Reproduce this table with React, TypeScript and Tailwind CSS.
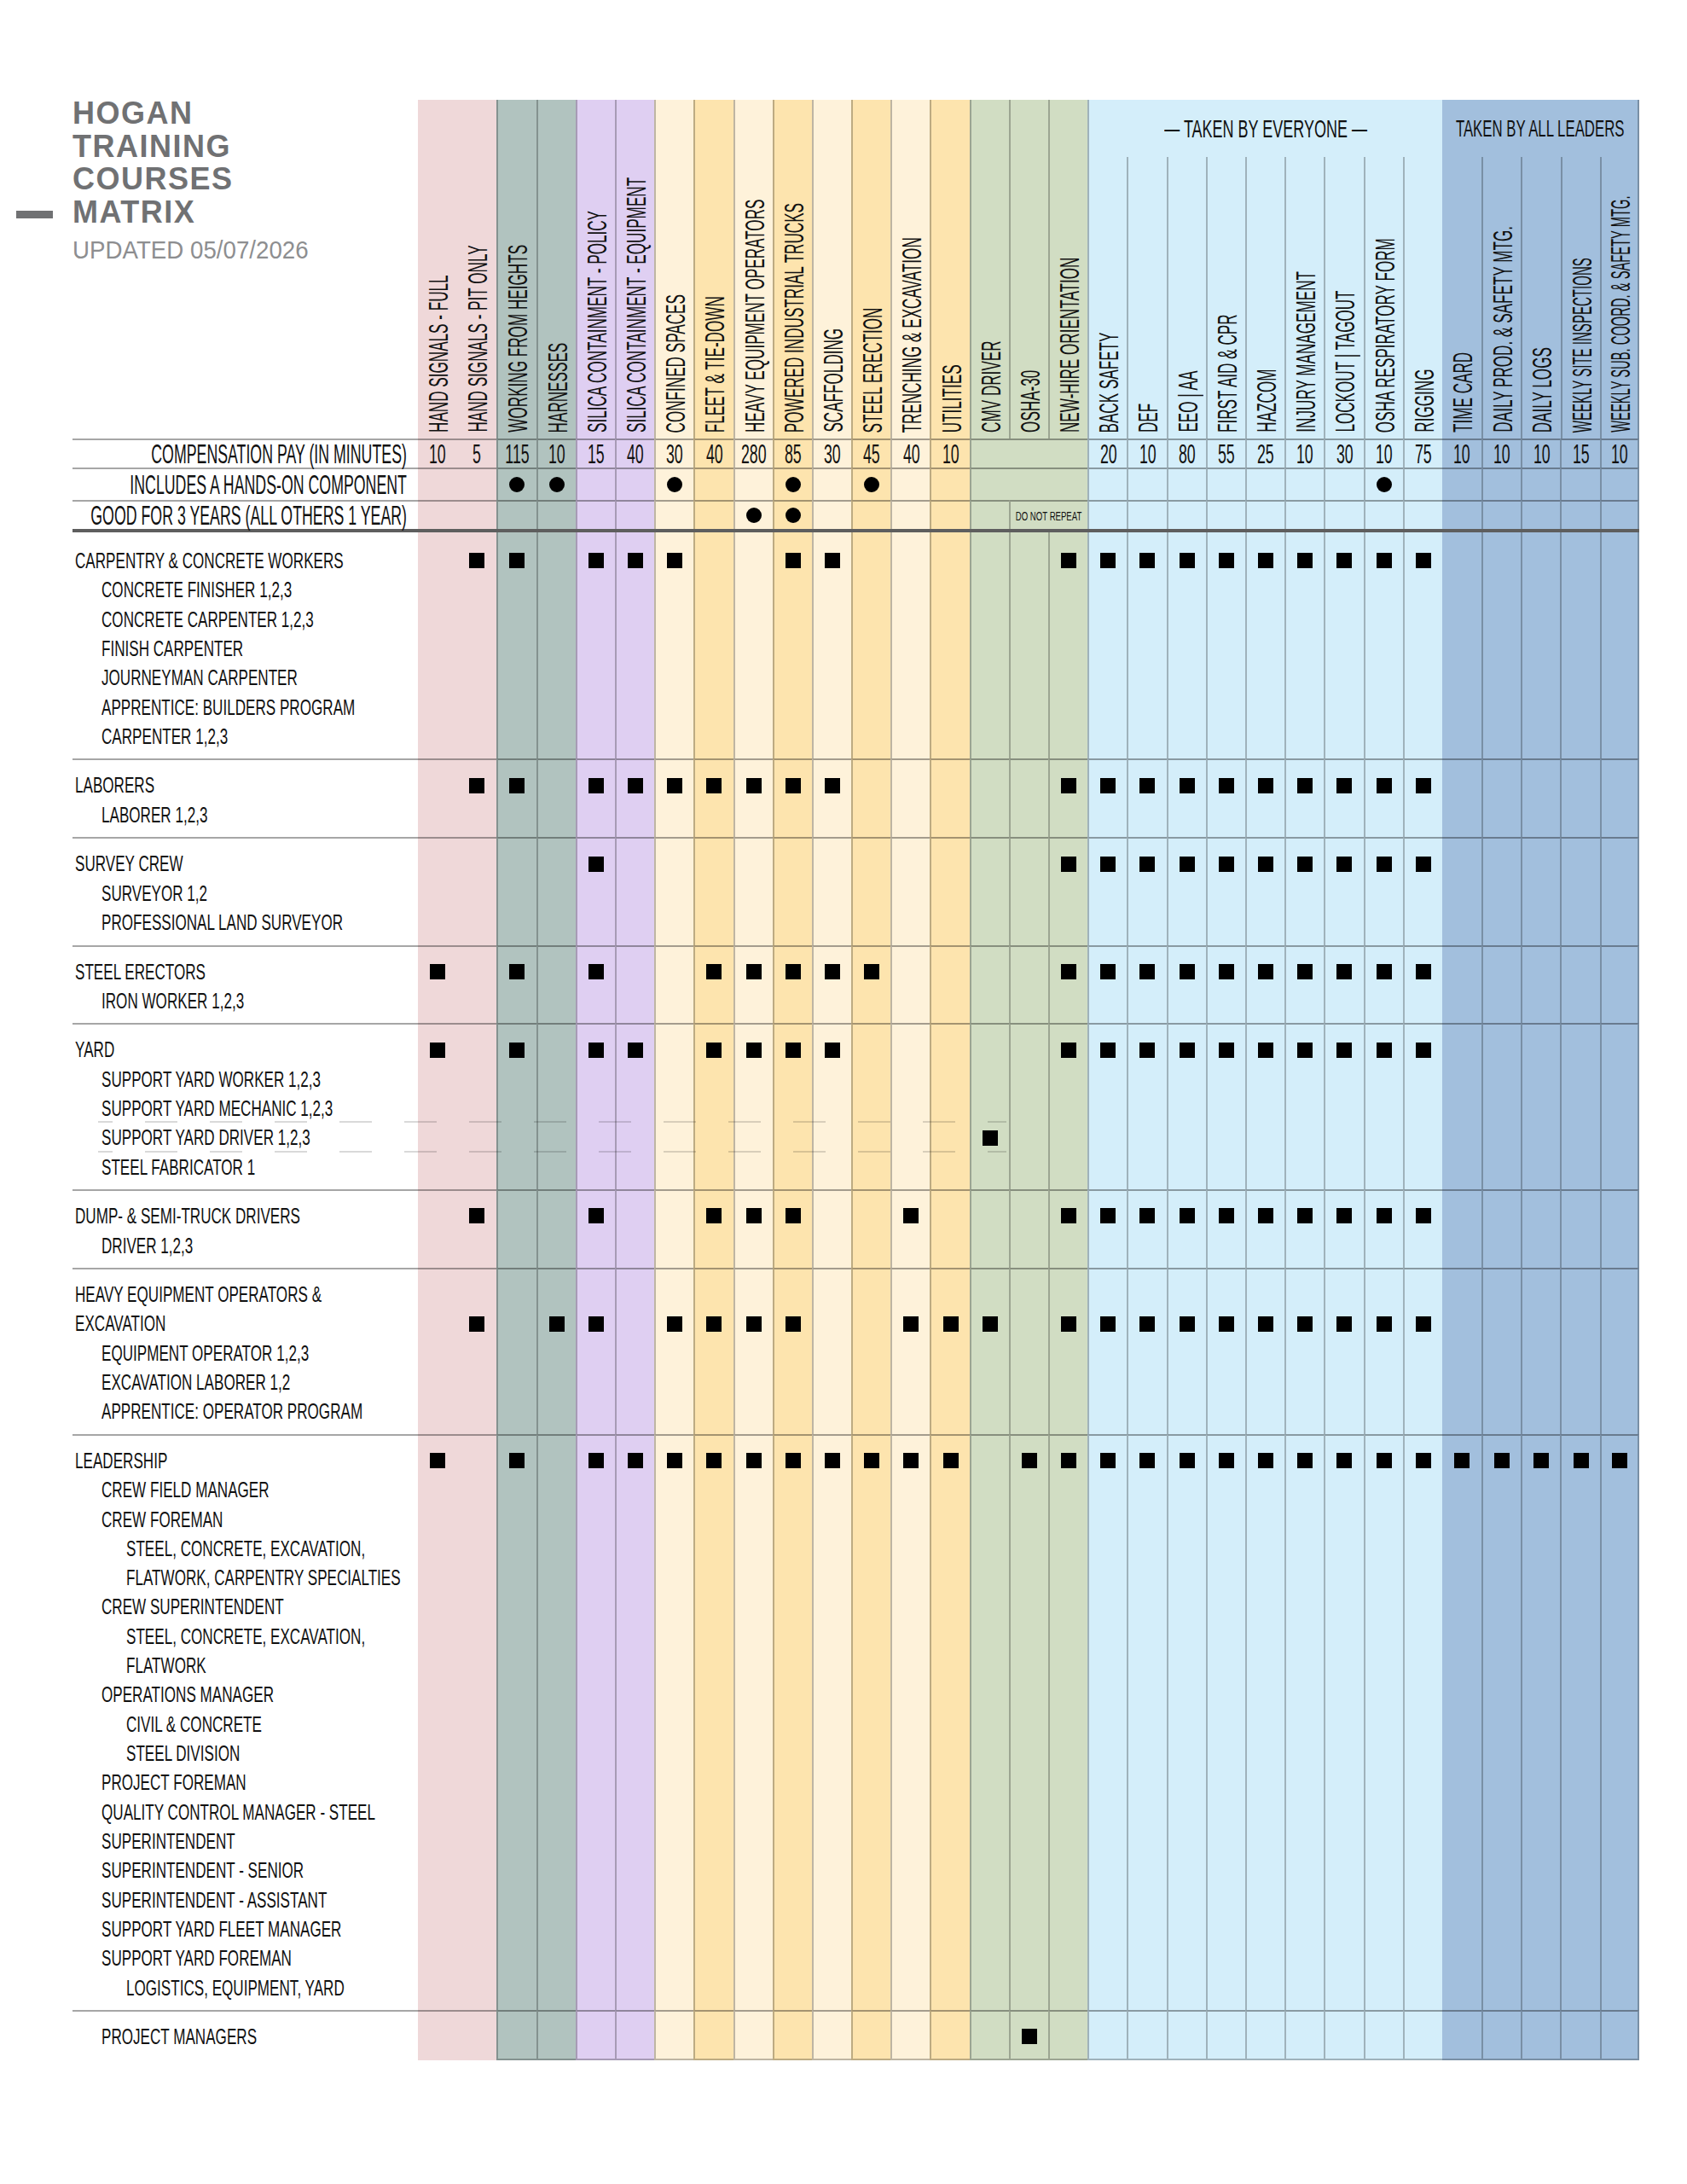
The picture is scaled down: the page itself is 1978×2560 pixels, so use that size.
import clsx from 'clsx';

type Col = { t: string; bg: string; sc?: string };

const PINK = 'bg-[#efd8d9]';
const SLATE = 'bg-[#b1c3bf]';
const LILAC = 'bg-[#dfcff2]';
const CREAM = 'bg-[#fef2da]';
const SAND = 'bg-[#fde4ae]';
const SAGE = 'bg-[#d1ddc3]';
const SKY = 'bg-[#d4eefa]';
const BLUE = 'bg-[#a2bfdd]';

const COLS: Col[] = [
  { t: 'HAND SIGNALS - FULL', bg: PINK },
  { t: 'HAND SIGNALS - PIT ONLY', bg: PINK },
  { t: 'WORKING FROM HEIGHTS', bg: SLATE },
  { t: 'HARNESSES', bg: SLATE },
  { t: 'SILICA CONTAINMENT - POLICY', bg: LILAC },
  { t: 'SILICA CONTAINMENT - EQUIPMENT', bg: LILAC },
  { t: 'CONFINED SPACES', bg: CREAM },
  { t: 'FLEET & TIE-DOWN', bg: SAND },
  { t: 'HEAVY EQUIPMENT OPERATORS', bg: CREAM },
  { t: 'POWERED INDUSTRIAL TRUCKS', bg: SAND },
  { t: 'SCAFFOLDING', bg: CREAM },
  { t: 'STEEL ERECTION', bg: SAND },
  { t: 'TRENCHING & EXCAVATION', bg: CREAM },
  { t: 'UTILITIES', bg: SAND },
  { t: 'CMV DRIVER', bg: SAGE },
  { t: 'OSHA-30', bg: SAGE },
  { t: 'NEW-HIRE ORIENTATION', bg: SAGE },
  { t: 'BACK SAFETY', bg: SKY },
  { t: 'DEF', bg: SKY },
  { t: 'EEO | AA', bg: SKY },
  { t: 'FIRST AID & CPR', bg: SKY },
  { t: 'HAZCOM', bg: SKY },
  { t: 'INJURY MANAGEMENT', bg: SKY },
  { t: 'LOCKOUT | TAGOUT', bg: SKY },
  { t: 'OSHA RESPIRATORY FORM', bg: SKY },
  { t: 'RIGGING', bg: SKY },
  { t: 'TIME CARD', bg: BLUE },
  { t: 'DAILY PROD.  & SAFETY MTG.', bg: BLUE },
  { t: 'DAILY LOGS', bg: BLUE },
  { t: 'WEEKLY SITE INSPECTIONS', bg: BLUE, sc: 'scale-y-[0.47]' },
  { t: 'WEEKLY SUB. COORD. & SAFETY MTG.', bg: BLUE, sc: 'scale-y-[0.46]' },
];

const PAY = ['10', '5', '115', '10', '15', '40', '30', '40', '280', '85', '30', '45', '40', '10', '', '', '', '20', '10', '80', '55', '25', '10', '30', '10', '75', '10', '10', '10', '15', '10'];
const HANDS_ON = [2, 3, 6, 9, 11, 24];
const THREE_YEARS = [8, 9];

const range = (a: number, b: number) => Array.from({ length: b - a + 1 }, (_, k) => a + k);
const EVERYONE = range(17, 25);
const LEADERS = range(26, 30);

// pink pair and the light-blue/blue seam carry no divider
const vb = (i: number) => (i === 0 || i === 1 || i === 26 ? '' : 'border-l-2 border-l-black/25');
const rb = (i: number) => (i === 30 ? 'border-r-2 border-r-black/25' : '');

const WIDTH: Record<number, string> = { 1: 'w-[46.2px]', 2: 'w-[92.4px]', 3: 'w-[138.6px]' };
const MARK_MT: Record<number, string> = { 0: 'mt-[8.2px]', 1: 'mt-[42.5px]', 3: 'mt-[111.2px]' };
const INDENT = ['pl-[3px]', 'pl-[34px]', 'pl-[63px]'];

type Group = { lines: [number, string][]; marks: [number, number][]; yardDashes?: boolean };

const at = (cols: number[], line: number): [number, number][] => cols.map((c) => [c, line]);

const GROUPS: Group[] = [
  {
    lines: [
      [0, 'CARPENTRY & CONCRETE WORKERS'],
      [1, 'CONCRETE FINISHER 1,2,3'],
      [1, 'CONCRETE CARPENTER 1,2,3'],
      [1, 'FINISH CARPENTER'],
      [1, 'JOURNEYMAN CARPENTER'],
      [1, 'APPRENTICE: BUILDERS PROGRAM'],
      [1, 'CARPENTER 1,2,3'],
    ],
    marks: at([1, 2, 4, 5, 6, 9, 10, 16, ...EVERYONE], 0),
  },
  {
    lines: [
      [0, 'LABORERS'],
      [1, 'LABORER 1,2,3'],
    ],
    marks: at([1, 2, 4, 5, 6, 7, 8, 9, 10, 16, ...EVERYONE], 0),
  },
  {
    lines: [
      [0, 'SURVEY CREW'],
      [1, 'SURVEYOR 1,2'],
      [1, 'PROFESSIONAL LAND SURVEYOR'],
    ],
    marks: at([4, 16, ...EVERYONE], 0),
  },
  {
    lines: [
      [0, 'STEEL ERECTORS'],
      [1, 'IRON WORKER 1,2,3'],
    ],
    marks: at([0, 2, 4, 7, 8, 9, 10, 11, 16, ...EVERYONE], 0),
  },
  {
    lines: [
      [0, 'YARD'],
      [1, 'SUPPORT YARD WORKER 1,2,3'],
      [1, 'SUPPORT YARD MECHANIC 1,2,3'],
      [1, 'SUPPORT YARD DRIVER 1,2,3'],
      [1, 'STEEL FABRICATOR 1'],
    ],
    marks: [...at([0, 2, 4, 5, 7, 8, 9, 10, 16, ...EVERYONE], 0), [14, 3]],
    yardDashes: true,
  },
  {
    lines: [
      [0, 'DUMP- & SEMI-TRUCK DRIVERS'],
      [1, 'DRIVER 1,2,3'],
    ],
    marks: at([1, 4, 7, 8, 9, 12, 16, ...EVERYONE], 0),
  },
  {
    lines: [
      [0, 'HEAVY EQUIPMENT OPERATORS &'],
      [0, 'EXCAVATION'],
      [1, 'EQUIPMENT OPERATOR 1,2,3'],
      [1, 'EXCAVATION LABORER 1,2'],
      [1, 'APPRENTICE: OPERATOR PROGRAM'],
    ],
    marks: at([1, 3, 4, 6, 7, 8, 9, 12, 13, 14, 16, ...EVERYONE], 1),
  },
  {
    lines: [
      [0, 'LEADERSHIP'],
      [1, 'CREW FIELD MANAGER'],
      [1, 'CREW FOREMAN'],
      [2, 'STEEL, CONCRETE, EXCAVATION,'],
      [2, 'FLATWORK, CARPENTRY SPECIALTIES'],
      [1, 'CREW SUPERINTENDENT'],
      [2, 'STEEL, CONCRETE, EXCAVATION,'],
      [2, 'FLATWORK'],
      [1, 'OPERATIONS MANAGER'],
      [2, 'CIVIL & CONCRETE'],
      [2, 'STEEL DIVISION'],
      [1, 'PROJECT FOREMAN'],
      [1, 'QUALITY CONTROL MANAGER - STEEL'],
      [1, 'SUPERINTENDENT'],
      [1, 'SUPERINTENDENT - SENIOR'],
      [1, 'SUPERINTENDENT - ASSISTANT'],
      [1, 'SUPPORT YARD FLEET MANAGER'],
      [1, 'SUPPORT YARD FOREMAN'],
      [2, 'LOGISTICS, EQUIPMENT, YARD'],
    ],
    marks: at([0, 2, 4, 5, 6, 7, 8, 9, 10, 11, 12, 13, 15, 16, ...EVERYONE, ...LEADERS], 0),
  },
  {
    lines: [[1, 'PROJECT MANAGERS']],
    marks: [[15, 0]],
  },
];

function Narrow({ children, className }: { children: React.ReactNode; className: string }) {
  return <span className={clsx('inline-block whitespace-nowrap', className)}>{children}</span>;
}

function Square() {
  return <span className="block h-[18px] w-[18px] bg-black" />;
}

function Dot() {
  return <span className="block h-[18px] w-[18px] rounded-full bg-black" />;
}

function HeadCell({ i, h }: { i: number; h: string }) {
  const c = COLS[i];
  return (
    <div className={clsx('flex w-[46.2px] shrink-0 items-end justify-center pb-[7px] pl-[2px]', h, c.bg, vb(i), rb(i))}>
      <div className="rotate-180 whitespace-nowrap text-[32px] leading-none [writing-mode:vertical-rl]">
        <span className={clsx('inline-block origin-top', c.sc ?? 'scale-y-[0.535]')}>{c.t}</span>
      </div>
    </div>
  );
}

function Title() {
  return (
    <div className="-mt-[3px] w-[490px] shrink-0 pl-[19px]">
      <div className="text-[36px] font-bold leading-[38.5px] tracking-[1.5px] text-[#707173]">
        <div className="pl-[66px]">HOGAN</div>
        <div className="pl-[66px]">TRAINING</div>
        <div className="pl-[66px]">COURSES</div>
        <div className="flex items-center">
          <span className="mr-[23px] mt-[6px] h-[9px] w-[43px] bg-[#707173]" />
          MATRIX
        </div>
      </div>
      <div className="mt-[7px] pl-[66px] text-[29px] leading-[36px] text-[#8d8e90]">
        <Narrow className="origin-left scale-x-[0.955]">UPDATED 05/07/2026</Narrow>
      </div>
    </div>
  );
}

function Header() {
  return (
    <div className="flex">
      <Title />
      {range(0, 16).map((i) => (
        <HeadCell key={i} i={i} h="h-[397px]" />
      ))}
      <div className="flex flex-col">
        <div className="flex h-[67px] w-[415.8px] items-center justify-center border-l-2 border-l-black/25 bg-[#d4eefa]">
          <Narrow className="scale-x-[0.6] text-[30px] leading-none">— TAKEN BY EVERYONE —</Narrow>
        </div>
        <div className="flex">
          {EVERYONE.map((i) => (
            <HeadCell key={i} i={i} h="h-[330px]" />
          ))}
        </div>
      </div>
      <div className="flex flex-col">
        <div className="flex h-[67px] w-[231px] items-center justify-center border-r-2 border-r-black/25 bg-[#a2bfdd]">
          <Narrow className="scale-x-[0.6] text-[28px] leading-none">TAKEN BY ALL LEADERS</Narrow>
        </div>
        <div className="flex">
          {LEADERS.map((i) => (
            <HeadCell key={i} i={i} h="h-[330px]" />
          ))}
        </div>
      </div>
    </div>
  );
}

type Slot = { start: number; span: number };

function slots(merges: Slot[]): Slot[] {
  const out: Slot[] = [];
  let i = 0;
  while (i < 31) {
    const m = merges.find((s) => s.start === i);
    if (m) {
      out.push(m);
      i += m.span;
    } else {
      out.push({ start: i, span: 1 });
      i += 1;
    }
  }
  return out;
}

function MetaRow({
  h,
  label,
  merges,
  render,
}: {
  h: string;
  label: string;
  merges: Slot[];
  render: (s: Slot) => React.ReactNode;
}) {
  return (
    <div className={clsx('flex', h)}>
      <div className="flex w-[405px] shrink-0 items-center justify-end border-t-2 border-t-black/35 pr-[13px]">
        <Narrow className="origin-right scale-x-[0.555] text-[32px] leading-none">{label}</Narrow>
      </div>
      {slots(merges).map((s) => (
        <div
          key={s.start}
          className={clsx(
            'flex shrink-0 items-center justify-center border-t-2 border-t-black/35',
            WIDTH[s.span],
            COLS[s.start].bg,
            vb(s.start),
            rb(s.start + s.span - 1),
          )}
        >
          {render(s)}
        </div>
      ))}
    </div>
  );
}

function GroupRow({ g, first, last }: { g: Group; first: boolean; last: boolean }) {
  return (
    <div className="relative flex">
      <div
        className={clsx(
          'w-[405px] shrink-0 text-[26.5px] leading-[34.33px]',
          first ? 'pt-[16px]' : 'border-t-2 border-t-black/35 pt-[12px]',
          last ? 'pb-[10.5px]' : 'pb-[9.2px]',
        )}
      >
        {g.lines.map(([lvl, text], k) => (
          <div key={k} className={INDENT[lvl]}>
            <Narrow className="origin-left scale-x-[0.645]">{text}</Narrow>
          </div>
        ))}
      </div>
      {range(0, 30).map((i) => {
        const mark = g.marks.find(([c]) => c === i);
        return (
          <div
            key={i}
            className={clsx(
              'flex w-[46.2px] shrink-0 flex-col items-center',
              COLS[i].bg,
              vb(i),
              rb(i),
              first ? 'pt-[16px]' : 'border-t-2 border-t-black/35 pt-[12px]',
              last && i > 1 && 'border-b-2 border-b-black/25',
            )}
          >
            {mark && (
              <div className={MARK_MT[mark[1]]}>
                <Square />
              </div>
            )}
          </div>
        );
      })}
      {g.yardDashes && (
        <>
          <div className="absolute left-[30px] top-[115px] h-[2px] w-[1065px] bg-[image:repeating-linear-gradient(90deg,rgba(0,0,0,0.15)_0_17px,transparent_17px_55px,rgba(0,0,0,0.15)_55px_76px)]" />
          <div className="absolute left-[30px] top-[150px] h-[2px] w-[1065px] bg-[image:repeating-linear-gradient(90deg,rgba(0,0,0,0.15)_0_17px,transparent_17px_55px,rgba(0,0,0,0.15)_55px_76px)]" />
        </>
      )}
    </div>
  );
}

export default function App() {
  return (
    <div className="min-h-[2560px] w-[1978px] bg-white pt-[117px] font-['Liberation_Sans',Arial,sans-serif] text-[#111]">
      <Header />
      <div className="ml-[85px]">
        <MetaRow
          h="h-[34px]"
          label="COMPENSATION PAY (IN MINUTES)"
          merges={[{ start: 14, span: 3 }]}
          render={(s) =>
            s.span === 1 ? <Narrow className="scale-x-[0.555] text-[32px] leading-none">{PAY[s.start]}</Narrow> : null
          }
        />
        <MetaRow
          h="h-[38px]"
          label="INCLUDES A HANDS-ON COMPONENT"
          merges={[{ start: 14, span: 3 }]}
          render={(s) => (s.span === 1 && HANDS_ON.includes(s.start) ? <Dot /> : null)}
        />
        <MetaRow
          h="h-[34px]"
          label="GOOD FOR 3 YEARS (ALL OTHERS 1 YEAR)"
          merges={[{ start: 15, span: 2 }]}
          render={(s) =>
            s.span === 2 ? (
              <Narrow className="scale-x-[0.64] text-[15px] leading-none">DO NOT REPEAT</Narrow>
            ) : THREE_YEARS.includes(s.start) ? (
              <Dot />
            ) : null
          }
        />
        <div className="h-[4px] w-[1837.2px] bg-[#5e5e5e]" />
        {GROUPS.map((g, k) => (
          <GroupRow key={k} g={g} first={k === 0} last={k === GROUPS.length - 1} />
        ))}
      </div>
    </div>
  );
}
